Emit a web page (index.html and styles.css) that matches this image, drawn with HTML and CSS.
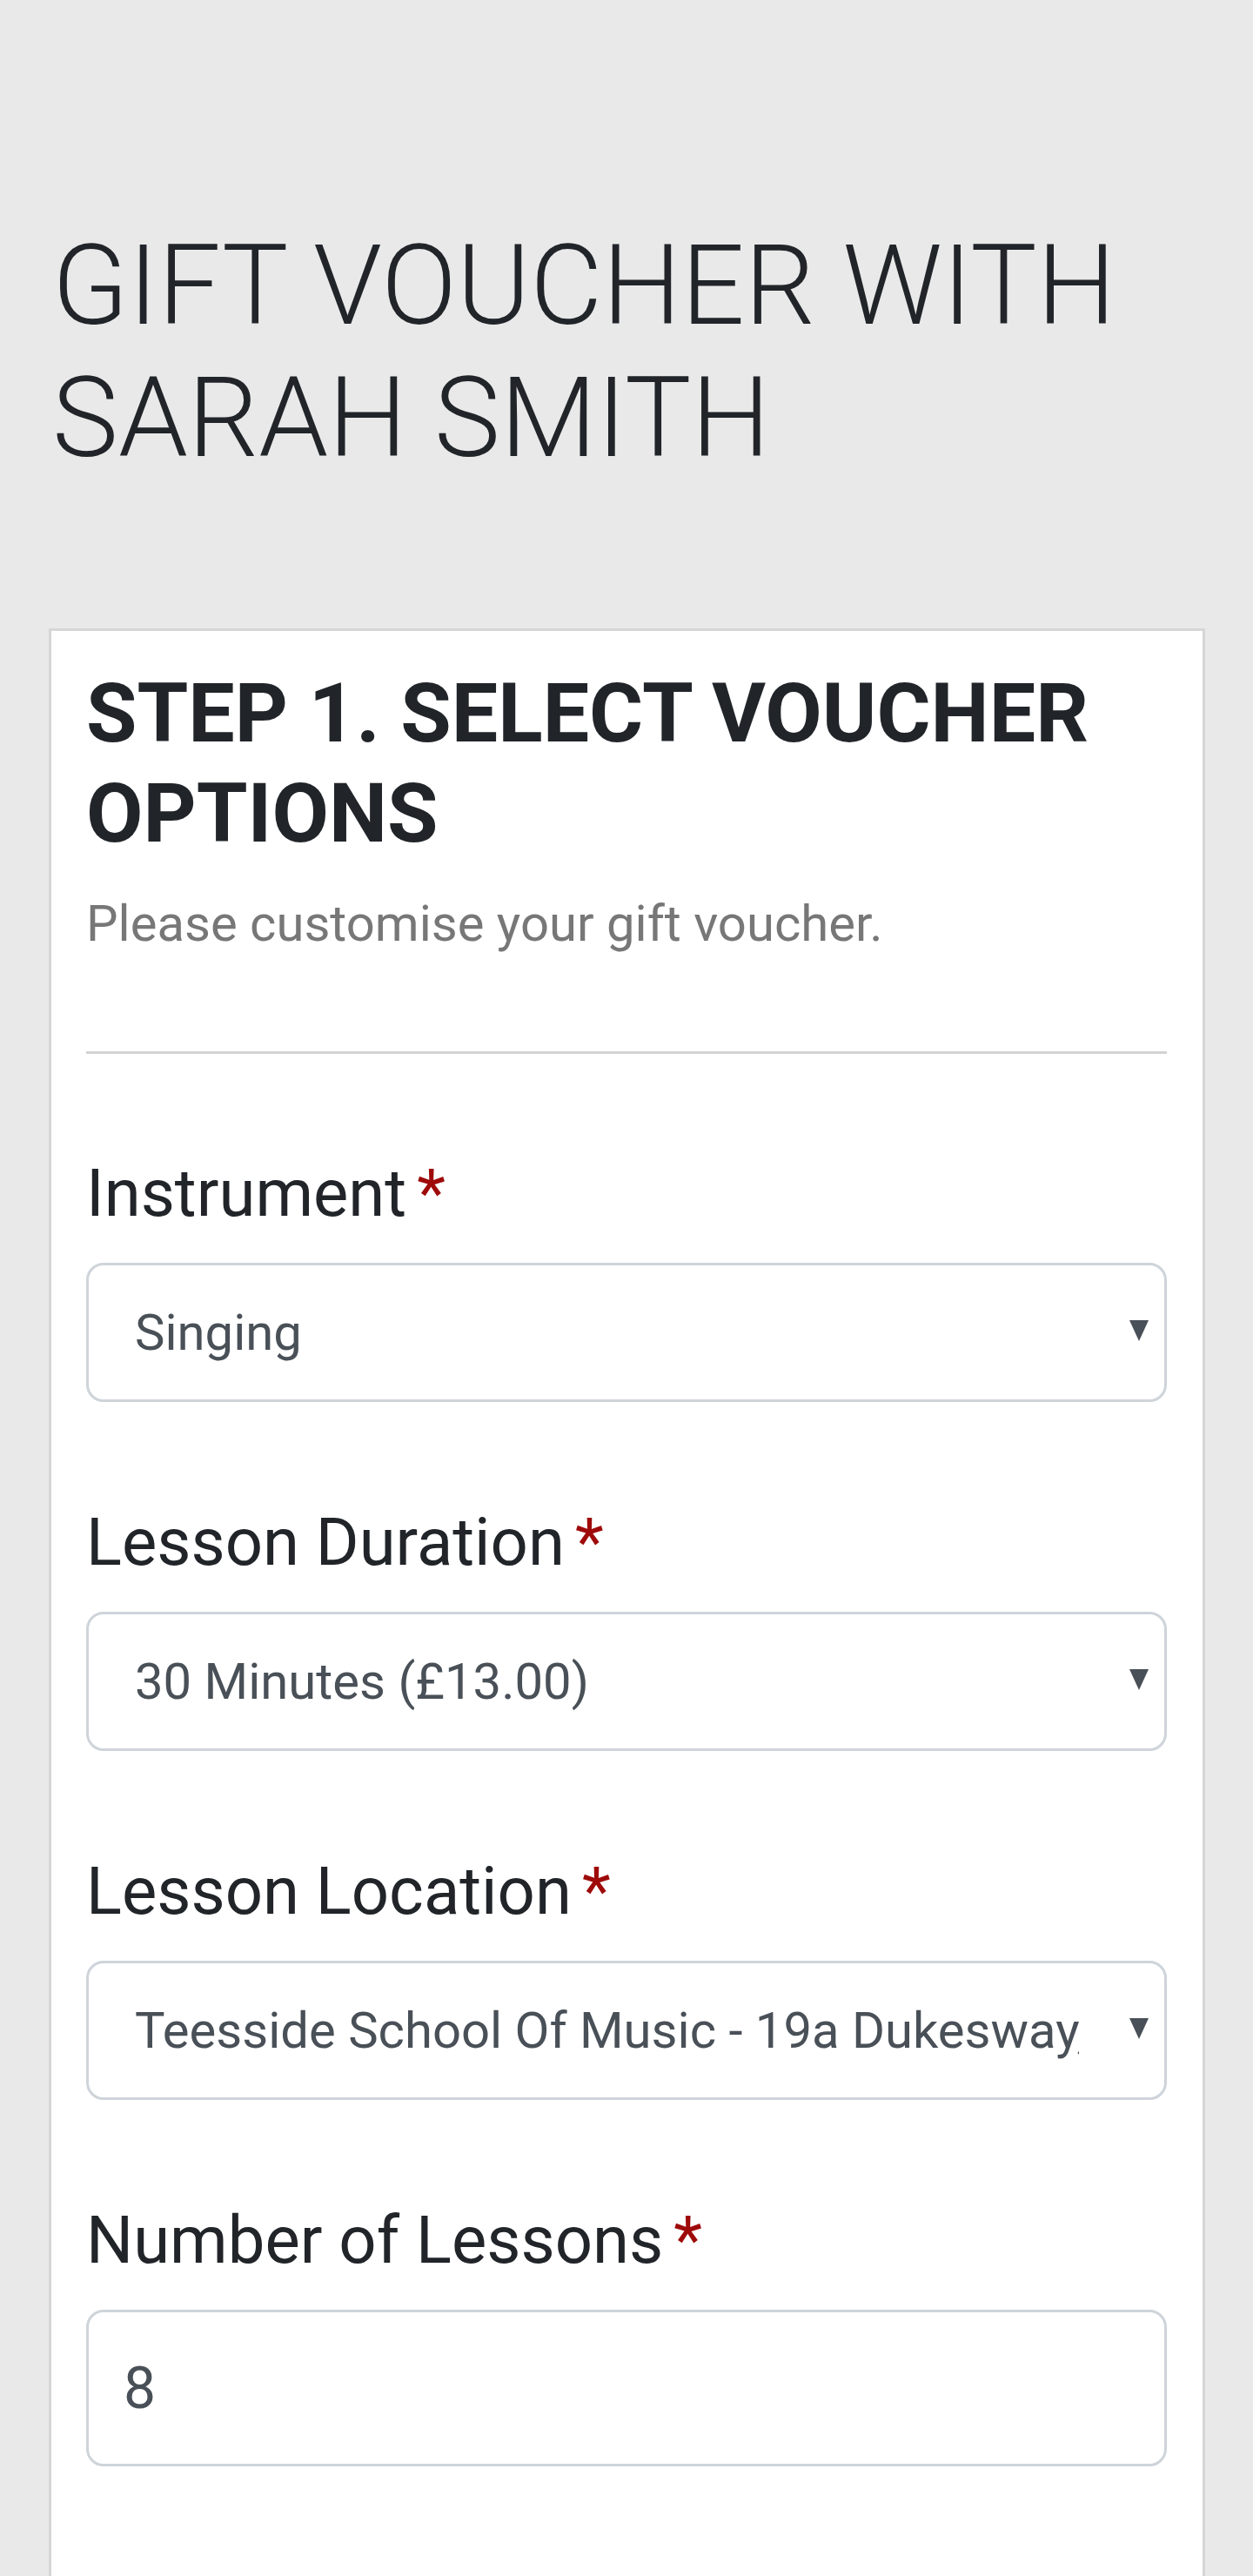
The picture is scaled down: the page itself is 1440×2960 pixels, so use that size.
FILE: index.html
```html
<!DOCTYPE html>
<html lang="en">
<head>
    <meta charset="UTF-8">
    <meta name="viewport" content="width=device-width, initial-scale=1.0">
    <title>Gift Voucher with Sarah Smith</title>
    <link rel="stylesheet" href="styles.css">
</head>
<body>

<header class="page-header">
    <h1>Gift Voucher with Sarah Smith</h1>
</header>

<div class="voucher-card">
    <h2>Step 1. Select Voucher Options</h2>
    <p class="step-intro">Please customise your gift voucher.</p>

    <hr class="divider">

    <div class="field">
        <label for="instrument">Instrument<span class="required">*</span></label>
        <div class="select-wrap">
            <select id="instrument">
                <option>Singing</option>
                <option>Piano</option>
                <option>Guitar</option>
            </select>
        </div>
    </div>

    <div class="field">
        <label for="duration">Lesson Duration<span class="required">*</span></label>
        <div class="select-wrap">
            <select id="duration">
                <option>30 Minutes (£13.00)</option>
                <option>45 Minutes (£19.50)</option>
                <option>60 Minutes (£26.00)</option>
            </select>
        </div>
    </div>

    <div class="field">
        <label for="location">Lesson Location<span class="required">*</span></label>
        <div class="select-wrap">
            <select id="location">
                <option>Teesside School Of Music - 19a Dukesway, Thornaby, Stockton-on-Tees</option>
            </select>
        </div>
    </div>

    <div class="field">
        <label for="lessons">Number of Lessons<span class="required">*</span></label>
        <input type="number" id="lessons" value="8" min="1">
    </div>
</div>

</body>
</html>
```

FILE: styles.css
```css
body {
    font-family: 'Roboto', 'Liberation Sans', sans-serif;
    margin: 0;
    padding: 0;
    background: #e9e9e9;
    color: #212529;
}

.page-header {
    padding: 252px 60px 0;
}

.page-header h1 {
    margin: 0;
    font-size: 128px;
    font-weight: 300;
    line-height: 152px;
    text-transform: uppercase;
}

.voucher-card {
    background: white;
    border: 3px solid #d6d6d6;
    margin: 166px 55px 0 56px;
    padding: 37px 41px 600px 40px;
}

.voucher-card h2 {
    margin: 0;
    font-size: 95px;
    font-weight: 700;
    line-height: 115px;
    text-transform: uppercase;
}

.step-intro {
    margin: 27px 0 0;
    font-size: 58px;
    line-height: 84px;
    color: #777;
}

.divider {
    border: none;
    border-top: 3px solid #d3d3d3;
    margin: 105px 0 116px;
}

.field {
    margin-bottom: 117px;
}

.field label {
    display: block;
    font-size: 76px;
    line-height: 89px;
    margin-bottom: 35px;
}

.required {
    color: #9e0a0a;
    margin-left: 12px;
}

.select-wrap {
    position: relative;
}

.select-wrap::after {
    content: "";
    position: absolute;
    right: 21px;
    top: 66px;
    border-left: 11px solid transparent;
    border-right: 11px solid transparent;
    border-top: 24px solid #495057;
    pointer-events: none;
}

.select-wrap select,
.field input {
    display: block;
    width: 100%;
    box-sizing: border-box;
    border: 3px solid #ced4da;
    border-radius: 20px;
    background: white;
    color: #495057;
    font-family: inherit;
}

.select-wrap select {
    -webkit-appearance: none;
    appearance: none;
    height: 160px;
    padding: 0 98px 0 53px;
    font-size: 58px;
}

.field input {
    height: 180px;
    padding: 0 40px;
    font-size: 66px;
    -moz-appearance: textfield;
}

.field input::-webkit-inner-spin-button,
.field input::-webkit-outer-spin-button {
    -webkit-appearance: none;
    margin: 0;
}
```
